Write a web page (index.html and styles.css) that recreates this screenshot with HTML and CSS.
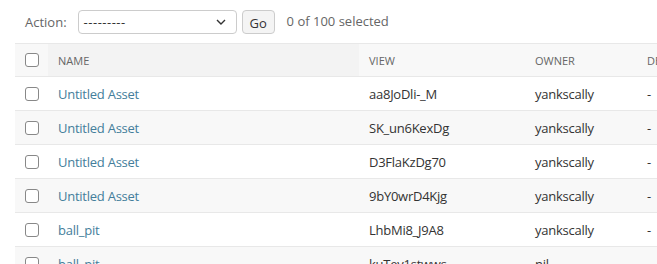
FILE: index.html
```html
<!DOCTYPE html>
<html lang="en">
<head>
  <meta charset="UTF-8" />
  <title>Select asset to change</title>
  <link rel="stylesheet" href="styles.css">
</head>
<body>

  <div class="actions">
    <label>Action:</label>
    <div class="select">
      <span>---------</span>
      <svg width="10" height="6" viewBox="0 0 10 6"><path d="M1 1l4 4 4-4" fill="none" stroke="#333" stroke-width="1.4"/></svg>
    </div>
    <button class="go">Go</button>
    <span class="counter">0 of 100 selected</span>
  </div>

  <table class="result-list">
    <thead>
      <tr>
        <th class="check"><span class="box"></span></th>
        <th class="sorted col-name">Name</th>
        <th class="col-view">View</th>
        <th class="col-owner">Owner</th>
        <th>De</th>
      </tr>
    </thead>
    <tbody>
      <tr>
        <td class="check"><span class="box"></span></td>
        <td><a href="#">Untitled Asset</a></td>
        <td>aa8JoDli-_M</td>
        <td>yankscally</td>
        <td>-</td>
      </tr>
      <tr>
        <td class="check"><span class="box"></span></td>
        <td><a href="#">Untitled Asset</a></td>
        <td>SK_un6KexDg</td>
        <td>yankscally</td>
        <td>-</td>
      </tr>
      <tr>
        <td class="check"><span class="box"></span></td>
        <td><a href="#">Untitled Asset</a></td>
        <td>D3FlaKzDg70</td>
        <td>yankscally</td>
        <td>-</td>
      </tr>
      <tr>
        <td class="check"><span class="box"></span></td>
        <td><a href="#">Untitled Asset</a></td>
        <td>9bY0wrD4Kjg</td>
        <td>yankscally</td>
        <td>-</td>
      </tr>
      <tr>
        <td class="check"><span class="box"></span></td>
        <td><a href="#">ball_pit</a></td>
        <td>LhbMi8_J9A8</td>
        <td>yankscally</td>
        <td>-</td>
      </tr>
      <tr>
        <td class="check"><span class="box"></span></td>
        <td><a href="#">ball_pit</a></td>
        <td>kuTev1stwws</td>
        <td>nil</td>
        <td>-</td>
      </tr>
    </tbody>
  </table>

</body>
</html>
```

FILE: styles.css
```css
body {
  margin: 0;
  padding: 0 0 0 15px;
  font-family: "Open Sans", "Noto Sans", sans-serif;
  font-size: 13px;
  color: #333;
  background: #fff;
  overflow: hidden;
}

.actions {
  display: flex;
  align-items: center;
  height: 43px;
  padding-left: 10px;
  color: #666;
}

.actions label {
  margin-right: 11px;
}

.select {
  width: 159px;
  height: 24px;
  box-sizing: border-box;
  border: 1px solid #ccc;
  border-radius: 4px;
  display: flex;
  align-items: center;
  justify-content: space-between;
  padding: 0 10px 0 5px;
  color: #333;
}

.select span {
  letter-spacing: 0.5px;
}

.go {
  margin-left: 5px;
  width: 33px;
  height: 24px;
  border: 1px solid #ccc;
  border-radius: 4px;
  background: #f4f4f4;
  font: inherit;
  color: #333;
  padding: 2px 0 0;
}

.counter {
  margin-left: 12px;
  margin-top: -2px;
}

.result-list {
  border-collapse: collapse;
  width: 700px;
  table-layout: fixed;
  letter-spacing: -0.25px;
}

.result-list th {
  background: #f8f8f8;
  border-top: 1px solid #e8e8e8;
  border-bottom: 1px solid #e8e8e8;
  height: 32px;
  padding: 0 10px;
  text-align: left;
  font-weight: normal;
  font-size: 11px;
  letter-spacing: 0;
  text-transform: uppercase;
  color: #666;
}

.result-list th.sorted {
  background: #f3f3f3;
}

.result-list td {
  height: 33px;
  padding: 0 10px;
  border-bottom: 1px solid #e8e8e8;
  color: #333;
  white-space: nowrap;
}

.result-list tbody tr:nth-child(even) td {
  background: #f8f8f8;
}

.result-list a {
  color: #447e9b;
  text-decoration: none;
}

.check {
  width: 13px;
}

.col-name {
  width: 291px;
}

.col-view {
  width: 146px;
}

.col-owner {
  width: 92px;
}

.box {
  display: block;
  width: 12px;
  height: 12px;
  border: 1px solid #888;
  border-radius: 3px;
  background: #fff;
}
```
